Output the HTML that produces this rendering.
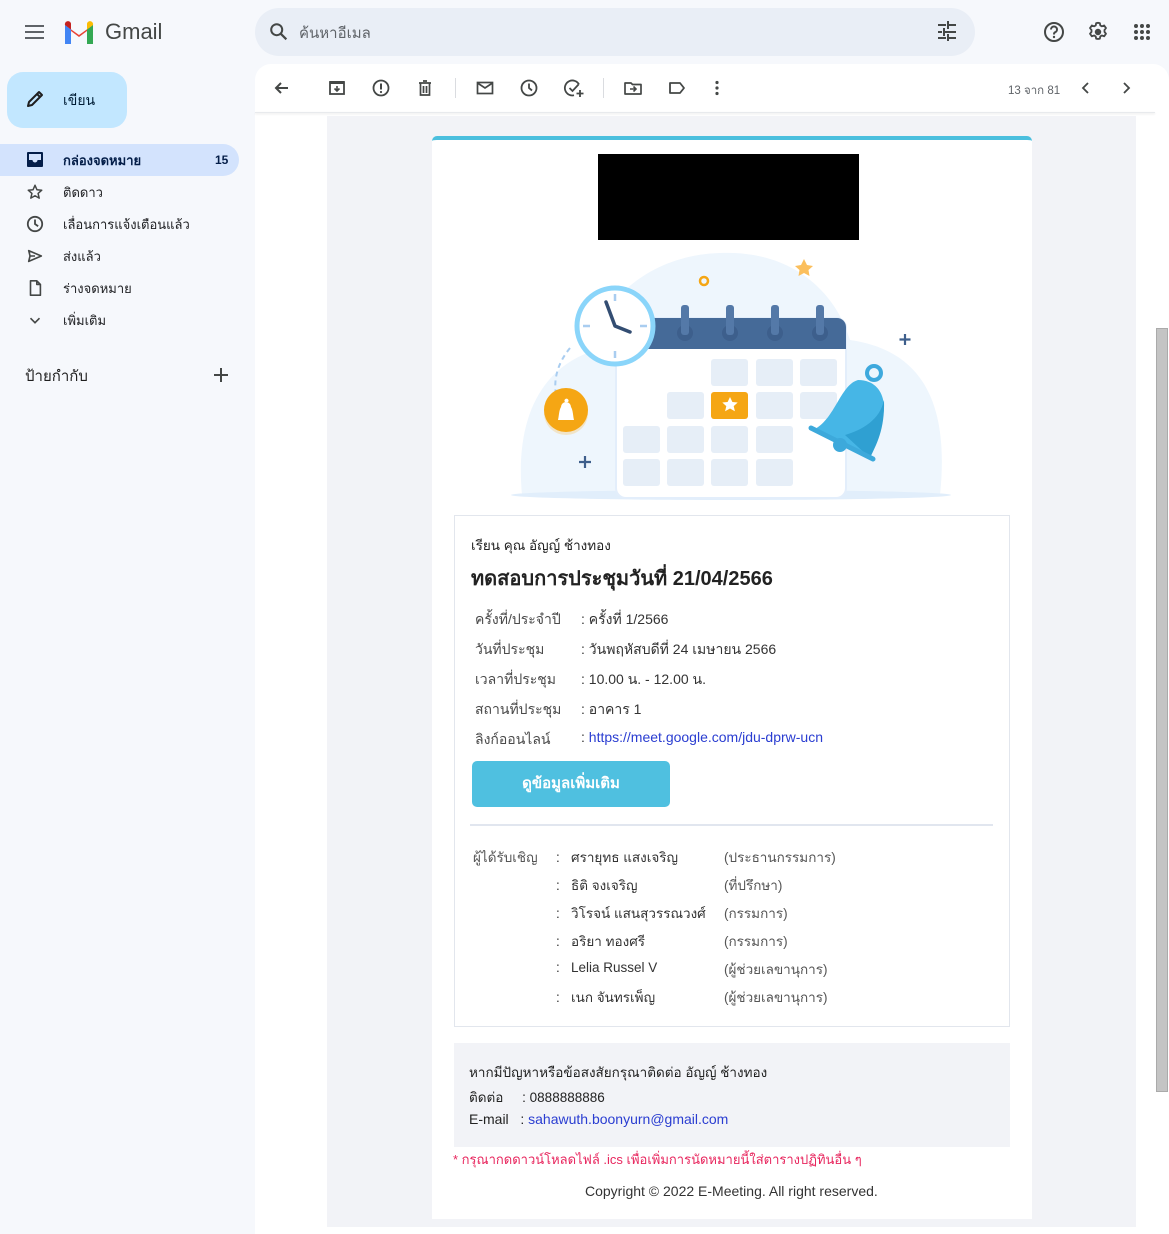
<!DOCTYPE html>
<html><head><meta charset="utf-8">
<style>
*{margin:0;padding:0;box-sizing:border-box}
html,body{width:1169px;height:1227px;overflow:hidden;background:#f6f8fc;font-family:"Liberation Sans","Noto Sans CJK SC",sans-serif;color:#202124}
.abs{position:absolute}
.th{font-family:"Liberation Sans","Noto Sans CJK SC",sans-serif}
.nav{position:absolute;left:0;width:239px;height:32px;display:flex;align-items:center;font-size:13px;color:#202124}
.nav svg{position:absolute;left:26px}
.nav span{position:absolute;left:63px}
.ic{position:absolute;top:78px}
.row{position:absolute;left:475px;font-size:14px;color:#333}
.row .l{color:#4a4a4a;position:absolute;left:0;white-space:nowrap}
.row .v{position:absolute;left:106px;white-space:nowrap}
.inv{position:absolute;font-size:13.5px;color:#333;white-space:nowrap}
</style></head><body>
<svg class="abs" style="left:24px;top:24px" width="22" height="16"><rect x="1" y="1" width="19" height="2" fill="#5f6368"/><rect x="1" y="7" width="19" height="2" fill="#5f6368"/><rect x="1" y="13" width="19" height="2" fill="#5f6368"/></svg>
<svg class="abs" style="left:63px;top:20px" width="32" height="24" viewBox="0 0 32 24">
<path d="M2 24V5l14 10L30 5v19h-6V11l-8 6-8-6v13z" fill="#ea4335"/>
<path d="M2 24V5l6 4.5V24z" fill="#4285f4"/><path d="M24 24V9.5L30 5v19z" fill="#34a853"/>
<path d="M24 9.5V3.5a3 3 0 0 1 6 1.5z" fill="#fbbc04"/><path d="M2 5a3 3 0 0 1 6-1.5v6z" fill="#c5221f"/></svg>
<div class="abs" style="left:105px;top:19px;font-size:22px;color:#444746">Gmail</div>
<div class="abs" style="left:255px;top:8px;width:720px;height:48px;border-radius:24px;background:#e9eef6"></div>
<svg class="abs" style="left:268px;top:21px" width="22" height="22" viewBox="0 0 24 24"><circle cx="9.5" cy="9.5" r="6" fill="none" stroke="#444746" stroke-width="2.2"/><path d="M14 14l6 6" stroke="#444746" stroke-width="2.4"/></svg>
<div class="abs th" style="left:299px;top:21px;font-size:15px;color:#5f6368">ค้นหาอีเมล</div>
<svg class="abs" style="left:937px;top:21px" width="20" height="20" viewBox="0 0 20 20" fill="#444746"><rect x="1" y="3" width="8" height="2"/><rect x="12" y="3" width="7" height="2"/><rect x="10" y="0" width="2" height="8"/><rect x="1" y="10" width="4" height="2"/><rect x="8" y="10" width="11" height="2"/><rect x="6" y="7" width="2" height="8"/><rect x="1" y="16" width="8" height="2"/><rect x="12" y="16" width="7" height="2"/><rect x="10" y="13" width="2" height="7"/></svg>
<svg class="abs" style="left:1043px;top:21px" width="22" height="22" viewBox="0 0 22 22"><circle cx="11" cy="11" r="9" fill="none" stroke="#444746" stroke-width="2"/><path d="M8 8.5a3 3 0 1 1 4 2.8c-1 .5-1 1-1 2.2" fill="none" stroke="#444746" stroke-width="2"/><circle cx="11" cy="16" r="1.2" fill="#444746"/></svg>
<svg class="abs" style="left:1087px;top:21px" width="22" height="22" viewBox="0 0 24 24"><path d="M12 2l2 .3.5 2.5 1.8 1 2.4-.9 2 2.8-1.6 2 0 2.2 1.6 2-2 2.8-2.4-.9-1.8 1-.5 2.5-2 .3-2-.3-.5-2.5-1.8-1-2.4.9-2-2.8 1.6-2v-2.2l-1.6-2 2-2.8 2.4.9 1.8-1 .5-2.5z" fill="none" stroke="#444746" stroke-width="2" stroke-linejoin="round"/><circle cx="12" cy="12" r="3.5" fill="#444746"/></svg>
<svg class="abs" style="left:1133px;top:23px" width="18" height="18" viewBox="0 0 18 18" fill="#444746"><circle cx="3" cy="3" r="2"/><circle cx="9" cy="3" r="2"/><circle cx="15" cy="3" r="2"/><circle cx="3" cy="9" r="2"/><circle cx="9" cy="9" r="2"/><circle cx="15" cy="9" r="2"/><circle cx="3" cy="15" r="2"/><circle cx="9" cy="15" r="2"/><circle cx="15" cy="15" r="2"/></svg>

<div class="abs" style="left:7px;top:72px;width:120px;height:56px;border-radius:16px;background:#c2e7ff"></div>
<svg class="abs" style="left:25px;top:89px" width="20" height="20" viewBox="0 0 20 20"><path d="M3 17l1-4L14 3l3 3L7 16z M12 5l3 3" fill="none" stroke="#1f1f1f" stroke-width="2" stroke-linejoin="round"/></svg>
<div class="abs th" style="left:63px;top:90px;font-size:14px;color:#001d35">เขียน</div>

<div class="abs" style="left:0;top:144px;width:239px;height:32px;border-radius:0 16px 16px 0;background:#d3e3fd"></div>
<div class="nav th" style="top:144px;font-weight:bold;color:#041e49"><svg width="16" height="16" viewBox="0 0 16 16" style="top:8px;left:27px"><rect x="0" y="0" width="16" height="15" rx="1" fill="#041e49"/><path d="M2 2h12v6h-3.5a2.5 2.5 0 0 1-5 0H2z" fill="#d3e3fd"/></svg><span>กล่องจดหมาย</span><span style="left:215px;font-size:12px">15</span></div>
<div class="nav th" style="top:176px"><svg width="18" height="18" viewBox="0 0 24 24" style="top:7px"><path d="M12 3l2.6 6 6.4.6-4.9 4.3 1.5 6.3L12 17l-5.6 3.2 1.5-6.3L3 9.6 9.4 9z" fill="none" stroke="#444746" stroke-width="2" stroke-linejoin="round"/></svg><span>ติดดาว</span></div>
<div class="nav th" style="top:208px"><svg width="18" height="18" viewBox="0 0 20 20" style="top:7px"><circle cx="10" cy="10" r="8" fill="none" stroke="#444746" stroke-width="2"/><path d="M10 5v5l3.5 2.5" fill="none" stroke="#444746" stroke-width="2"/></svg><span>เลื่อนการแจ้งเตือนแล้ว</span></div>
<div class="nav th" style="top:240px"><svg width="18" height="18" viewBox="0 0 20 20" style="top:7px"><path d="M3 4l14 6-14 6 1.5-6z M4.5 10H10" fill="none" stroke="#444746" stroke-width="1.8" stroke-linejoin="round"/></svg><span>ส่งแล้ว</span></div>
<div class="nav th" style="top:272px"><svg width="18" height="18" viewBox="0 0 20 20" style="top:7px"><path d="M5 2h7l4 4v12H5z M12 2v4h4" fill="none" stroke="#444746" stroke-width="1.8" stroke-linejoin="round"/></svg><span>ร่างจดหมาย</span></div>
<div class="nav th" style="top:304px"><svg width="18" height="18" viewBox="0 0 20 20" style="top:7px"><path d="M5 8l5 5 5-5" fill="none" stroke="#444746" stroke-width="1.8"/></svg><span>เพิ่มเติม</span></div>
<div class="abs th" style="left:25px;top:364px;font-size:15px;color:#1f1f1f">ป้ายกำกับ</div>
<svg class="abs" style="left:213px;top:367px" width="16" height="16"><path d="M8 1v14M1 8h14" stroke="#444746" stroke-width="2"/></svg>

<div class="abs" style="left:255px;top:64px;width:914px;height:1170px;background:#fff;border-radius:16px 16px 0 0"></div>
<div class="abs" style="left:255px;top:112px;width:900px;height:1px;background:#e8eaed;box-shadow:0 1px 2px rgba(0,0,0,.12)"></div>
<svg class="ic" style="left:272px" width="20" height="20" viewBox="0 0 20 20"><path d="M16 10H4m5-5l-5 5 5 5" fill="none" stroke="#444746" stroke-width="2"/></svg>
<svg class="ic" style="left:328px" width="18" height="20" viewBox="0 0 18 20"><rect x="2" y="4" width="14" height="12" fill="none" stroke="#444746" stroke-width="1.8"/><rect x="2" y="3" width="14" height="3" fill="#444746"/><path d="M9 8v5m-2.5-2.5L9 13l2.5-2.5" fill="none" stroke="#444746" stroke-width="1.6"/></svg>
<svg class="ic" style="left:371px" width="20" height="20" viewBox="0 0 20 20"><circle cx="10" cy="10" r="7.5" fill="none" stroke="#444746" stroke-width="1.8"/><path d="M10 5.5v6" stroke="#444746" stroke-width="2"/><circle cx="10" cy="14" r="1.1" fill="#444746"/></svg>
<svg class="ic" style="left:416px" width="18" height="20" viewBox="0 0 18 20"><path d="M3 5h12M7 3h4M4.5 5v12h9V5M7.5 8v7m3-7v7" fill="none" stroke="#444746" stroke-width="1.7"/></svg>
<div class="abs" style="left:455px;top:78px;width:1px;height:20px;background:#dadce0"></div>
<svg class="ic" style="left:475px" width="20" height="20" viewBox="0 0 20 20"><rect x="2.5" y="4.5" width="15" height="11" fill="none" stroke="#444746" stroke-width="1.7"/><path d="M2.5 5l7.5 5 7.5-5" fill="none" stroke="#444746" stroke-width="1.7"/></svg>
<svg class="ic" style="left:519px" width="20" height="20" viewBox="0 0 20 20"><circle cx="10" cy="10" r="7.5" fill="none" stroke="#444746" stroke-width="1.8"/><path d="M10 5.5V10l3 2.5" fill="none" stroke="#444746" stroke-width="1.8"/></svg>
<svg class="ic" style="left:563px" width="22" height="20" viewBox="0 0 22 20"><path d="M16 6.5A7.5 7.5 0 1 0 11 17.3" fill="none" stroke="#444746" stroke-width="1.8"/><path d="M6.5 10l3 3 6-6.5M17 12v7m-3.5-3.5h7" fill="none" stroke="#444746" stroke-width="1.8"/></svg>
<div class="abs" style="left:603px;top:78px;width:1px;height:20px;background:#dadce0"></div>
<svg class="ic" style="left:623px" width="20" height="20" viewBox="0 0 20 20"><path d="M2 5h6l1.5 1.5H18V16H2z" fill="none" stroke="#444746" stroke-width="1.7" stroke-linejoin="round"/><path d="M7 11h6m-2.5-2.5L13 11l-2.5 2.5" fill="none" stroke="#444746" stroke-width="1.6"/></svg>
<svg class="ic" style="left:667px" width="20" height="20" viewBox="0 0 20 20"><path d="M3 5h10l4 5-4 5H3z" fill="none" stroke="#444746" stroke-width="1.8" stroke-linejoin="round"/></svg>
<svg class="ic" style="left:707px" width="20" height="20" viewBox="0 0 20 20" fill="#444746"><circle cx="10" cy="4.5" r="1.6"/><circle cx="10" cy="10" r="1.6"/><circle cx="10" cy="15.5" r="1.6"/></svg>
<div class="abs th" style="left:1008px;top:82px;font-size:11.5px;color:#5f6368">13 จาก 81</div>
<svg class="ic" style="left:1077px" width="18" height="20" viewBox="0 0 18 20"><path d="M11 5l-5 5 5 5" fill="none" stroke="#444746" stroke-width="1.8"/></svg>
<svg class="ic" style="left:1117px" width="18" height="20" viewBox="0 0 18 20"><path d="M7 5l5 5-5 5" fill="none" stroke="#444746" stroke-width="1.8"/></svg>

<div class="abs" style="left:1156px;top:328px;width:12px;height:764px;background:#c4c4c4;border:1px solid #aaa"></div>

<div class="abs" style="left:327px;top:116px;width:809px;height:1111px;background:#f2f3f7"></div>
<div class="abs" style="left:432px;top:136px;width:600px;height:1083px;background:#fff;border-radius:5px 5px 0 0;border-top:4px solid #4bbfde"></div>
<div class="abs" style="left:598px;top:154px;width:261px;height:86px;background:#000"></div>

<svg class="abs" style="left:0;top:0" width="1169" height="520" viewBox="0 0 1169 520">
<path d="M522 495 C515 420 540 370 590 352 C600 300 650 255 720 253 C790 250 835 290 850 340 C920 350 950 400 940 495 Z" fill="#eef6fd"/>
<ellipse cx="731" cy="495" rx="220" ry="5" fill="#e1eefb"/>
<path d="M570 348 Q552 370 556 395" fill="none" stroke="#a9cdf0" stroke-width="2" stroke-dasharray="5 4"/>
<rect x="616" y="318" width="230" height="180" rx="10" fill="#fff" stroke="#e3eefb" stroke-width="2"/>
<path d="M616 349v-22a9 9 0 0 1 9-9h212a9 9 0 0 1 9 9v22z" fill="#456a98"/>
<g fill="#3d5f8c"><circle cx="685" cy="333" r="8"/><circle cx="730" cy="333" r="8"/><circle cx="775" cy="333" r="8"/><circle cx="820" cy="333" r="8"/></g>
<g fill="#5479a8"><rect x="681" y="305" width="8" height="30" rx="3"/><rect x="726" y="305" width="8" height="30" rx="3"/><rect x="771" y="305" width="8" height="30" rx="3"/><rect x="816" y="305" width="8" height="30" rx="3"/></g>
<g fill="#e6eef7">
<rect x="711" y="359" width="37" height="27" rx="3"/><rect x="756" y="359" width="37" height="27" rx="3"/><rect x="800" y="359" width="37" height="27" rx="3"/>
<rect x="667" y="392" width="37" height="27" rx="3"/><rect x="756" y="392" width="37" height="27" rx="3"/><rect x="800" y="392" width="37" height="27" rx="3"/>
<rect x="623" y="426" width="37" height="27" rx="3"/><rect x="667" y="426" width="37" height="27" rx="3"/><rect x="711" y="426" width="37" height="27" rx="3"/><rect x="756" y="426" width="37" height="27" rx="3"/>
<rect x="623" y="459" width="37" height="27" rx="3"/><rect x="667" y="459" width="37" height="27" rx="3"/><rect x="711" y="459" width="37" height="27" rx="3"/><rect x="756" y="459" width="37" height="27" rx="3"/></g>
<rect x="711" y="392" width="37" height="27" rx="3" fill="#f5a614"/>
<path d="M730 397l2.4 5 5.3.5-4 3.6 1.2 5.2-4.9-2.8-4.9 2.8 1.2-5.2-4-3.6 5.3-.5z" fill="#fff"/>
<circle cx="615" cy="326" r="38" fill="#fff" stroke="#8ad5fa" stroke-width="5"/>
<g stroke="#a9cdf0" stroke-width="2.5"><path d="M615 294v7M615 351v7M583 326h7M640 326h7"/></g>
<path d="M606 302l9 24 15 6" fill="none" stroke="#334d72" stroke-width="3.5" stroke-linecap="round" stroke-linejoin="round"/>
<circle cx="566" cy="413" r="22" fill="#f1e4c8"/>
<circle cx="566" cy="410" r="22" fill="#f5a614"/>
<path d="M558 420c1-4 1-10 3-13a5 5 0 0 1 10 0c2 3 2 9 3 13z M565 402a2 2 0 1 1 3 0" fill="#fff"/>
<circle cx="874" cy="373" r="7" fill="none" stroke="#3ea9dd" stroke-width="4"/>
<path d="M813 430 C835 420 840 385 858 380 C880 380 888 400 882 420 C878 440 872 450 870 458 Z" fill="#46b6e6"/>
<path d="M845 435 C862 430 880 420 884 400 C885 430 876 445 870 458 Z" fill="#2fa0d2"/>
<path d="M811 428l62 31" stroke="#3da9db" stroke-width="5" stroke-linecap="round"/>
<circle cx="840" cy="445" r="7" fill="#3da9db"/>
<circle cx="704" cy="281" r="4" fill="none" stroke="#f5a614" stroke-width="2.5"/>
<path d="M804 259l3 6 6 1-4.5 4 1 6-5.5-3-5.5 3 1-6-4.5-4 6-1z" fill="#fbbf5d"/>
<path d="M585 456v12M579 462h12M905 334v11M899.5 339.5h11" stroke="#3e5f8c" stroke-width="2.2"/>
</svg>

<div class="abs" style="left:454px;top:515px;width:556px;height:512px;border:1px solid #e2e6ed"></div>
<div class="abs th" style="left:471px;top:534px;font-size:13.5px;color:#222">เรียน คุณ อัญญ์ ช้างทอง</div>
<div class="abs th" style="left:471px;top:562px;font-size:20px;font-weight:bold;color:#222">ทดสอบการประชุมวันที่ 21/04/2566</div>
<div class="row th" style="top:609px"><span class="l">ครั้งที่/ประจำปี</span><span class="v">: ครั้งที่ 1/2566</span></div>
<div class="row th" style="top:639px"><span class="l">วันที่ประชุม</span><span class="v">: วันพฤหัสบดีที่ 24 เมษายน 2566</span></div>
<div class="row th" style="top:669px"><span class="l">เวลาที่ประชุม</span><span class="v">: 10.00 น. - 12.00 น.</span></div>
<div class="row th" style="top:699px"><span class="l">สถานที่ประชุม</span><span class="v">: อาคาร 1</span></div>
<div class="row th" style="top:729px"><span class="l">ลิงก์ออนไลน์</span><span class="v">: <span style="color:#2a3dd1">https://meet.google.com/jdu-dprw-ucn</span></span></div>
<div class="abs th" style="left:472px;top:761px;width:198px;height:46px;border-radius:5px;background:#4fc0e0;color:#fff;font-size:15px;font-weight:bold;text-align:center;line-height:46px">ดูข้อมูลเพิ่มเติม</div>
<div class="abs" style="left:470px;top:824px;width:523px;height:2px;background:#e1e6ef"></div>
<div class="inv th" style="left:473px;top:846px;color:#555">ผู้ได้รับเชิญ</div>
<div class="inv th" style="left:556px;top:846px">:&nbsp;&nbsp; ศรายุทธ แสงเจริญ</div><div class="inv th" style="left:724px;top:846px;color:#555">(ประธานกรรมการ)</div>
<div class="inv th" style="left:556px;top:874px">:&nbsp;&nbsp; ธิติ จงเจริญ</div><div class="inv th" style="left:724px;top:874px;color:#555">(ที่ปรึกษา)</div>
<div class="inv th" style="left:556px;top:902px">:&nbsp;&nbsp; วิโรจน์ แสนสุวรรณวงศ์</div><div class="inv th" style="left:724px;top:902px;color:#555">(กรรมการ)</div>
<div class="inv th" style="left:556px;top:930px">:&nbsp;&nbsp; อริยา ทองศรี</div><div class="inv th" style="left:724px;top:930px;color:#555">(กรรมการ)</div>
<div class="inv th" style="left:556px;top:960px">:&nbsp;&nbsp; Lelia Russel V</div><div class="inv th" style="left:724px;top:958px;color:#555">(ผู้ช่วยเลขานุการ)</div>
<div class="inv th" style="left:556px;top:986px">:&nbsp;&nbsp; เนก จันทรเพ็ญ</div><div class="inv th" style="left:724px;top:986px;color:#555">(ผู้ช่วยเลขานุการ)</div>

<div class="abs" style="left:454px;top:1043px;width:556px;height:104px;background:#f2f3f7"></div>
<div class="inv th" style="left:469px;top:1061px;color:#222">หากมีปัญหาหรือข้อสงสัยกรุณาติดต่อ อัญญ์ ช้างทอง</div>
<div class="inv th" style="left:469px;top:1086px;color:#222">ติดต่อ&nbsp;&nbsp;&nbsp;&nbsp; : 0888888886</div>
<div class="inv th" style="left:469px;top:1111px;color:#222;font-size:14px">E-mail&nbsp;&nbsp; : <span style="color:#2a3dd1">sahawuth.boonyurn@gmail.com</span></div>
<div class="inv th" style="left:453px;top:1149px;color:#e8265e;font-size:13px">* กรุณากดดาวน์โหลดไฟล์ .ics เพื่อเพิ่มการนัดหมายนี้ใส่ตารางปฏิทินอื่น ๆ</div>
<div class="inv th" style="left:585px;top:1183px;color:#333;font-size:14px">Copyright © 2022 E-Meeting. All right reserved.</div>
</body></html>
